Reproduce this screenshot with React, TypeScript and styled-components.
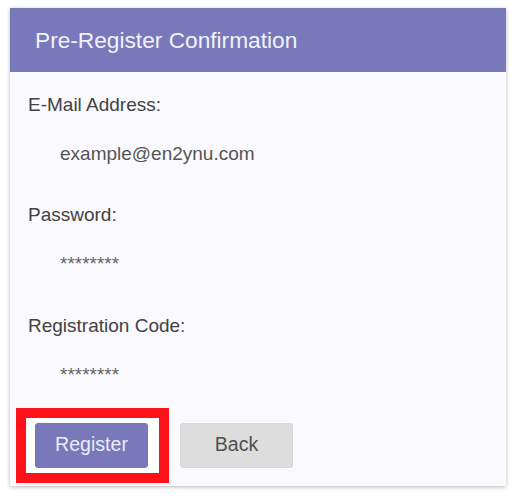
import React from "react";
import styled, { createGlobalStyle } from "styled-components";

const GlobalStyle = createGlobalStyle`
  html, body {
    margin: 0;
    padding: 0;
    background: #ffffff;
  }
  body {
    font-family: "Liberation Sans", Arial, sans-serif;
  }
`;

const Page = styled.div`
  padding: 8px 10px 13px 10px;
`;

const Card = styled.section`
  background: #f9f9fe;
  box-shadow: 0 1px 4px rgba(0, 0, 0, 0.28);
  display: flex;
  flex-direction: column;
`;

const Header = styled.header`
  height: 64px;
  background: #7878bb;
  color: #f2f2f9;
  font-size: 22.7px;
  line-height: 64px;
  padding: 0 25px;
`;

const Fields = styled.dl`
  margin: 0;
  padding: 20.9px 18px 0 18px;
`;

const Label = styled.dt`
  margin: 0;
  font-size: 19px;
  line-height: 23.04px;
  color: #424242;
  & + dd {
    margin-top: 25.96px;
  }
`;

const Value = styled.dd<{ $muted?: boolean }>`
  margin: 0 0 38.46px 32px;
  font-size: 19px;
  line-height: 23.04px;
  color: ${(p) => (p.$muted ? "#666666" : "#555555")};
  &:last-child {
    margin-bottom: 0;
  }
`;

const Actions = styled.div`
  display: flex;
  align-items: center;
  gap: 11px;
  padding: 21.7px 0 3px 6px;
`;

const Highlight = styled.div`
  border: 10px solid #ff1119;
  background: #ffffff;
  padding: 5px 11px 5px 9px;
  display: flex;
`;

const Button = styled.button<{ $primary?: boolean }>`
  width: 113px;
  height: 45px;
  border: 1px solid ${(p) => (p.$primary ? "#7575b8" : "#d8d8d8")};
  border-radius: 3px;
  background: ${(p) => (p.$primary ? "#7878bb" : "#dddddd")};
  color: ${(p) => (p.$primary ? "#ececf7" : "#505050")};
  font-family: "Liberation Sans", Arial, sans-serif;
  font-size: 19.6px;
  line-height: 1;
  padding: 0 0 1px 0;
  cursor: pointer;
`;

const fields = [
  { label: "E-Mail Address:", value: "example@en2ynu.com" },
  { label: "Password:", value: "********", muted: true },
  { label: "Registration Code:", value: "********", muted: true },
];

export default function App() {
  return (
    <>
      <GlobalStyle />
      <Page>
        <Card>
          <Header>Pre-Register Confirmation</Header>
          <Fields>
            {fields.map((f) => (
              <React.Fragment key={f.label}>
                <Label>{f.label}</Label>
                <Value $muted={f.muted}>{f.value}</Value>
              </React.Fragment>
            ))}
          </Fields>
          <Actions>
            <Highlight>
              <Button $primary>Register</Button>
            </Highlight>
            <Button>Back</Button>
          </Actions>
        </Card>
      </Page>
    </>
  );
}
